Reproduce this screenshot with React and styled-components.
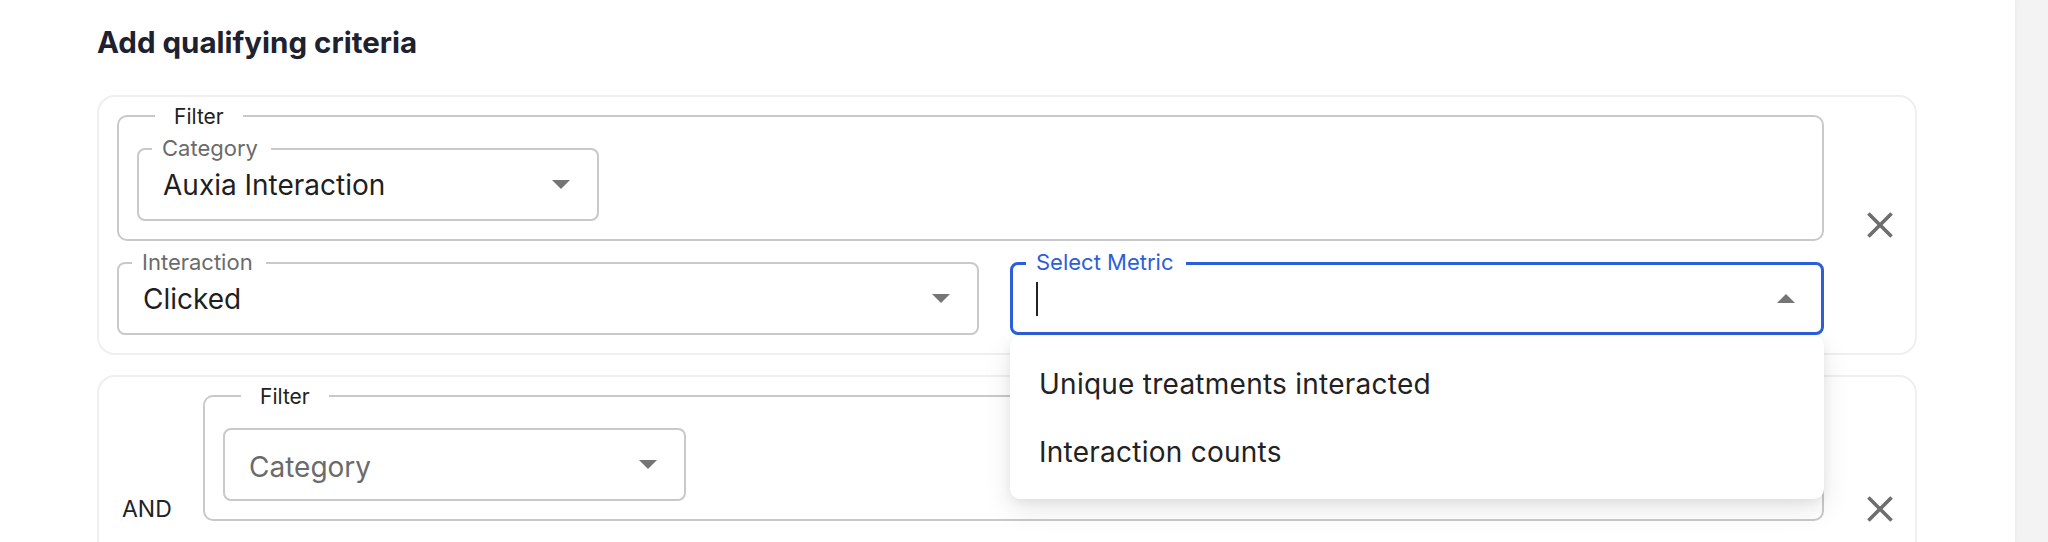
import React from "react";
import styled, { createGlobalStyle } from "styled-components";

const GlobalStyle = createGlobalStyle`
  html, body { margin: 0; padding: 0; background: #fff; }
  body { font-family: Inter, "Noto Sans", sans-serif; color: #222; }
  *, *::before, *::after { box-sizing: border-box; }
`;

const Page = styled.div`
  display: flex;
  width: 2048px;
  height: 542px;
  overflow: hidden;
  background: #fff;
`;

const Main = styled.main`
  flex: 1;
  padding: 25px 98px 0 97px;
`;

const SideStrip = styled.aside`
  width: 33px;
  flex: none;
  background: #f3f3f3;
  box-shadow: inset 5px 0 6px -5px rgba(0, 0, 0, 0.05);
`;

const Title = styled.h2`
  margin: 0 0 36px;
  font-size: 29.5px;
  line-height: 34px;
  font-weight: 700;
  color: #1e2130;
`;

const CardStack = styled.div`
  display: flex;
  flex-direction: column;
  gap: 20px;
`;

const Card = styled.section`
  display: grid;
  grid-template-columns: ${(p) => (p.$connector ? "86px 1fr 91px" : "1fr 91px")};
  align-items: center;
  border: 2px solid #efefef;
  border-radius: 18px;
  padding: 18px 0 18px 18px;
  background: #fff;
`;

const Connector = styled.div`
  padding-left: 5px;
  font-size: 23px;
  line-height: 28px;
  color: #222;
`;

const Content = styled.div`
  display: flex;
  flex-direction: column;
  gap: 21px;
`;

const Group = styled.div`
  position: relative;
  border: 2px solid #c9c9c9;
  border-radius: 10px;
  padding: 31px 18px 18px;
  min-height: ${(p) => p.$minHeight || "auto"};
`;

const GroupLegend = styled.span`
  position: absolute;
  top: 0;
  left: 36px;
  transform: translateY(-50%);
  padding: 0 19px;
  background: #fff;
  font-size: 21px;
  line-height: 26px;
  color: #222;
`;

const Row = styled.div`
  display: grid;
  grid-template-columns: 862px 1fr;
  gap: 31px;
`;

const SelectBox = styled.div`
  position: relative;
  display: flex;
  align-items: center;
  height: 73px;
  width: ${(p) => p.$width || "100%"};
  border: ${(p) => (p.$focused ? "3px solid #2b5fd9" : "2px solid #c9c9c9")};
  border-radius: 8px;
  padding: 0 ${(p) => (p.$focused ? "26.5px" : "27.5px")} 0 ${(p) => (p.$focused ? "23px" : "24px")};
  background: #fff;
`;

const FieldLabel = styled.span`
  position: absolute;
  top: ${(p) => (p.$focused ? "-3px" : "-2px")};
  left: 13px;
  transform: translateY(-50%);
  padding: 0 13px 0 10px;
  background: #fff;
  font-size: 22px;
  line-height: 26px;
  color: ${(p) => (p.$focused ? "#2b5fd9" : "#6b6b6b")};
`;

const Value = styled.span`
  flex: 1;
  font-size: 28px;
  line-height: 34px;
  padding-top: ${(p) => (p.$placeholder ? "4px" : "0")};
  color: ${(p) => (p.$placeholder ? "#6b6b6b" : "#1f1f1f")};
  white-space: nowrap;
`;

const Caret = styled.span`
  display: block;
  width: 2px;
  height: 34px;
  background: #222;
`;

const Spacer = styled.span`
  flex: 1;
`;

const ArrowIcon = styled.svg`
  display: block;
  flex: none;
  fill: #757575;
`;

const Menu = styled.ul`
  position: absolute;
  z-index: 10;
  top: calc(100% + 4px);
  left: -3px;
  right: -3px;
  margin: 0;
  padding: 14px 0 13px;
  list-style: none;
  background: #fff;
  border-radius: 10px;
  box-shadow: 0 10px 28px rgba(0, 0, 0, 0.1), 0 3px 10px rgba(0, 0, 0, 0.06);
`;

const MenuItem = styled.li`
  display: flex;
  align-items: center;
  height: 68px;
  padding-left: 29px;
  font-size: 28px;
  letter-spacing: 0.25px;
  color: #222;
`;

const CloseButton = styled.button`
  display: block;
  width: 44px;
  height: 44px;
  margin-left: 34px;
  padding: 0;
  border: 0;
  background: none;
  color: #6e6e6e;
  cursor: pointer;
  svg { display: block; fill: currentColor; }
`;

const Arrow = ({ up }) => (
  <ArrowIcon width="18" height="9" viewBox="0 0 18 9">
    {up ? <polygon points="0,9 18,9 9,0" /> : <polygon points="0,0 18,0 9,9" />}
  </ArrowIcon>
);

const CloseIcon = () => (
  <svg width="44" height="44" viewBox="0 0 24 24">
    <path d="M19 6.41 17.59 5 12 10.59 6.41 5 5 6.41 10.59 12 5 17.59 6.41 19 12 13.41 17.59 19 19 17.59 13.41 12z" />
  </svg>
);

const Select = ({ label, value, placeholder, width }) => (
  <SelectBox $width={width}>
    {label && <FieldLabel>{label}</FieldLabel>}
    <Value $placeholder={!value}>{value || placeholder}</Value>
    <Arrow />
  </SelectBox>
);

const metricOptions = ["Unique treatments interacted", "Interaction counts"];

export default function App() {
  return (
    <>
      <GlobalStyle />
      <Page>
        <Main>
          <Title>Add qualifying criteria</Title>
          <CardStack>
            <Card>
              <Content>
                <Group>
                  <GroupLegend>Filter</GroupLegend>
                  <Select label="Category" value="Auxia Interaction" width="462px" />
                </Group>
                <Row>
                  <Select label="Interaction" value="Clicked" />
                  <SelectBox $focused>
                    <FieldLabel $focused>Select Metric</FieldLabel>
                    <Caret />
                    <Spacer />
                    <Arrow up />
                    <Menu>
                      {metricOptions.map((o) => (
                        <MenuItem key={o}>{o}</MenuItem>
                      ))}
                    </Menu>
                  </SelectBox>
                </Row>
              </Content>
              <CloseButton aria-label="Remove">
                <CloseIcon />
              </CloseButton>
            </Card>
            <Card $connector>
              <Connector>AND</Connector>
              <Content>
                <Group>
                  <GroupLegend>Filter</GroupLegend>
                  <Select placeholder="Category" width="463px" />
                </Group>
                <Group $minHeight="80px" />
              </Content>
              <CloseButton aria-label="Remove">
                <CloseIcon />
              </CloseButton>
            </Card>
          </CardStack>
        </Main>
        <SideStrip />
      </Page>
    </>
  );
}
